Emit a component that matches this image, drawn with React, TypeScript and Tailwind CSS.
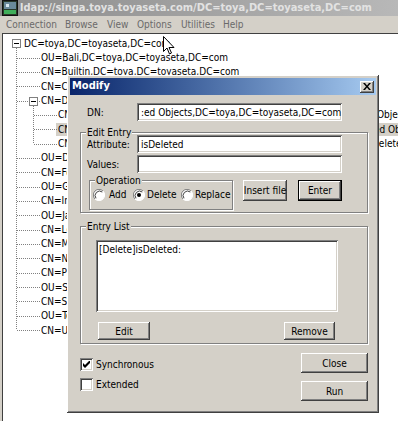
import React from 'react';

const raised =
  'bg-[#d4d0c8] shadow-[inset_-1px_-1px_#404040,inset_1px_1px_#ffffff,inset_-2px_-2px_#808080,inset_2px_2px_#d4d0c8]';
const sunken =
  'bg-white shadow-[inset_1px_1px_#808080,inset_-1px_-1px_#ffffff,inset_2px_2px_#404040,inset_-2px_-2px_#d4d0c8]';
const etched = 'border border-[#808080] shadow-[1px_1px_0_#ffffff,inset_1px_1px_0_#ffffff]';

type Row = { d: number; t: string; exp?: boolean; sel?: boolean };

const tail = ',DC=toya,DC=toyaseta,DC=com';
const rows: Row[] = [
  { d: 0, t: 'DC=toya,DC=toyaseta,DC=com', exp: true },
  { d: 1, t: 'OU=Bali' + tail },
  { d: 1, t: 'CN=Builtin' + tail },
  { d: 1, t: 'CN=Computers' + tail },
  { d: 1, t: 'CN=Deleted Objects' + tail, exp: true },
  { d: 2, t: 'CN=Lab-PC03 DEL:7c1e9a42-5b3d-4e1f-8a2c-9d0b6f31e,CN=Deleted Objects' + tail },
  { d: 2, t: 'CN=Kasir-02 DEL:3fa84d19-c6e2-4b7a-9e51-d2008c7ae3f1,CN=Deleted Objects' + tail, sel: true },
  { d: 2, t: 'CN=Guest Users DEL:9d02b7e5-1a4f-4d8e-b3d6-05a27e901408,CN=Deleted Objects' + tail },
  { d: 1, t: 'OU=Domain Controllers' + tail },
  { d: 1, t: 'CN=ForeignSecurityPrincipals' + tail },
  { d: 1, t: 'OU=Groups' + tail },
  { d: 1, t: 'CN=Infrastructure' + tail },
  { d: 1, t: 'OU=Jakarta' + tail },
  { d: 1, t: 'CN=LostAndFound' + tail },
  { d: 1, t: 'CN=Microsoft' + tail },
  { d: 1, t: 'CN=NTDS Quotas' + tail },
  { d: 1, t: 'CN=Program Data' + tail },
  { d: 1, t: 'OU=Surabaya' + tail },
  { d: 1, t: 'CN=System' + tail },
  { d: 1, t: 'OU=Toko' + tail },
  { d: 1, t: 'CN=Users' + tail },
];

const ROW = 14.35;
const cy = (i: number) => 2 + i * ROW + ROW / 2;

function TreeLines() {
  const last1 = rows.length - 1;
  return (
    <svg className="absolute inset-0 pointer-events-none" width="398" height="390">
      <g stroke="#808080" strokeDasharray="1 1" shapeRendering="crispEdges">
        <line x1="13.5" y1={cy(0) + 5} x2="13.5" y2={cy(last1)} />
        {rows.map((r, i) =>
          r.d === 1 ? <line key={i} x1="14" y1={Math.round(cy(i)) + 0.5} x2="37" y2={Math.round(cy(i)) + 0.5} /> : null
        )}
        <line x1="30.5" y1={cy(4) + 5} x2="30.5" y2={cy(7)} />
        {rows.map((r, i) =>
          r.d === 2 ? <line key={'g' + i} x1="31" y1={Math.round(cy(i)) + 0.5} x2="54" y2={Math.round(cy(i)) + 0.5} /> : null
        )}
      </g>
      {[{ x: 9, i: 0 }, { x: 26, i: 4 }].map((b) => {
        const y = Math.round(cy(b.i)) - 4;
        return (
          <g key={b.i} shapeRendering="crispEdges">
            <rect x={b.x + 0.5} y={y + 0.5} width="8" height="8" fill="#fff" stroke="#808080" />
            <line x1={b.x + 2} y1={y + 4.5} x2={b.x + 7} y2={y + 4.5} stroke="#000" />
          </g>
        );
      })}
    </svg>
  );
}

function Radio({ checked }: { checked?: boolean }) {
  return (
    <svg width="12" height="12" viewBox="0 0 12 12" className="shrink-0">
      <circle cx="6" cy="6" r="5.5" fill="#fff" />
      <path d="M10 2A5.5 5.5 0 0 0 2 10" fill="none" stroke="#808080" strokeWidth="1" />
      <path d="M9.3 3A4.5 4.5 0 0 0 3 9.3" fill="none" stroke="#404040" strokeWidth="1" />
      <path d="M2 10A5.5 5.5 0 0 0 10 2" fill="none" stroke="#ffffff" strokeWidth="1" />
      {checked && <circle cx="6" cy="6" r="2" fill="#000" />}
    </svg>
  );
}

function Check({ checked }: { checked?: boolean }) {
  return (
    <div className={`${sunken} w-[13px] h-[13px] shrink-0 flex items-center justify-center`}>
      {checked && (
        <svg width="7" height="7" viewBox="0 0 7 7">
          <path d="M0 2v3l2 2 5-5V-1L2 4z" fill="#000" />
        </svg>
      )}
    </div>
  );
}

function Btn({ children, className = '', def }: { children: React.ReactNode; className?: string; def?: boolean }) {
  return (
    <div
      className={`${def ? 'border border-black' : ''} ${raised} flex items-center justify-center shrink-0 whitespace-nowrap overflow-hidden ${className}`}
    >
      {children}
    </div>
  );
}

export default function App() {
  return (
    <div className="w-[398px] h-[421px] relative overflow-hidden bg-[#d4d0c8] text-[10px] text-black font-['DejaVu_Sans_Condensed','Liberation_Sans',sans-serif] [font-stretch:condensed] flex flex-col">
      {/* Main window title bar (inactive) */}
      <div className="h-[16px] bg-linear-to-r from-[#8c8c8c] to-[#b8b8b8] flex items-center">
        <svg width="16" height="16" viewBox="0 0 16 16" className="ml-[2px]">
          <rect x="0.5" y="0.5" width="15" height="15" fill="#2a3a2a" stroke="#111" />
          <rect x="2" y="2" width="12" height="7" fill="#6a8a9a" />
          <rect x="2" y="10" width="12" height="4" fill="#3fae5a" />
          <rect x="4" y="4" width="3" height="3" fill="#d8e8f0" />
        </svg>
        <span className="ml-[2px] text-[11px] font-bold text-[#e2e2e2] whitespace-nowrap">
          ldap://singa.toya.toyaseta.com/DC=toya,DC=toyaseta,DC=com
        </span>
      </div>

      {/* Menu bar */}
      <div className="h-[17px] flex items-center text-[#6a6a6a] whitespace-nowrap">
        <span className="ml-[6px] w-[59px]">Connection</span>
        <span className="w-[42px]">Browse</span>
        <span className="w-[30px]">View</span>
        <span className="w-[44px]">Options</span>
        <span className="w-[42px]">Utilities</span>
        <span>Help</span>
      </div>

      {/* Tree view */}
      <div className="flex-1 ml-[2px] border-l border-t border-[#404040] bg-white relative pt-[2px]">
        <TreeLines />
        {rows.map((r, i) => (
          <div key={i} className="h-[14.35px] flex items-center whitespace-nowrap" style={{ paddingLeft: 21 + 17 * r.d - 2 }}>
            <span className={`px-[2px] leading-[13px] ${r.sel ? 'bg-[#d4d0c8]' : ''}`}>{r.t}</span>
          </div>
        ))}
      </div>

      {/* Mouse pointer */}
      <svg className="absolute left-[163px] top-[36px]" width="12" height="20" viewBox="0 0 12 20">
        <path d="M0.5 0.5v15l3.5-3.5 2.5 6 2-1-2.5-5.5h5z" fill="#fff" stroke="#000" strokeWidth="1" />
      </svg>

      {/* Modify dialog */}
      <div className={`absolute left-[67px] top-[75px] w-[312px] h-[338px] p-[3px] ${raised}`}>
        <div className="h-[17px] bg-linear-to-r from-[#0a246a] to-[#a6caf0] flex items-center justify-between">
          <span className="ml-[2px] text-[11px] font-bold text-white">Modify</span>
          <div className={`${raised} w-[14px] h-[12px] mr-[2px] flex items-center justify-center`}>
            <svg width="8" height="7" viewBox="0 0 8 7">
              <path d="M0 0h2l2 2.5L6 0h2L5 3.5 8 7H6L4 4.5 2 7H0l3-3.5z" fill="#000" />
            </svg>
          </div>
        </div>

        {/* DN */}
        <div className="mt-[8px] h-[18px] flex items-center">
          <span className="ml-[17px] w-[50px]">DN:</span>
          <div className={`${sunken} w-[205px] h-[18px] flex items-center overflow-hidden pl-[4px] whitespace-nowrap`}>
            :ed Objects,DC=toya,DC=toyaseta,DC=com
          </div>
        </div>

        {/* Edit Entry */}
        <div className={`${etched} mt-[11px] ml-[10px] w-[288px] h-[81px]`}>
          <div className="-mt-[7px] ml-[5px] px-[1px] w-fit leading-[13px] bg-[#d4d0c8]">Edit Entry</div>
          <div className="-mt-[4px] h-[18px] flex items-center">
            <span className="ml-[6px] w-[50px]">Attribute:</span>
            <div className={`${sunken} w-[205px] h-[18px] flex items-center pl-[4px]`}>isDeleted</div>
          </div>
          <div className="mt-[2px] h-[18px] flex items-center">
            <span className="ml-[6px] w-[50px]">Values:</span>
            <div className={`${sunken} w-[205px] h-[18px]`} />
          </div>
          <div className="mt-[7px] flex items-start">
            <div className={`${etched} ml-[8px] w-[144px] h-[30px]`}>
              <div className="-mt-[7px] ml-[5px] px-[1px] w-fit leading-[13px] bg-[#d4d0c8]">Operation</div>
              <div className="mt-[1px] h-[13px] flex items-center whitespace-nowrap">
                <div className="ml-[3px] w-[40px] flex items-center gap-[4px]">
                  <Radio />
                  <span>Add</span>
                </div>
                <div className="w-[48px] flex items-center gap-[2px]">
                  <Radio checked />
                  <span>Delete</span>
                </div>
                <div className="flex items-center gap-[2px]">
                  <Radio />
                  <span>Replace</span>
                </div>
              </div>
            </div>
            <Btn className="ml-[10px] w-[44px] h-[21px]">Insert file</Btn>
            <Btn def className="ml-[11px] w-[44px] h-[21px]">Enter</Btn>
          </div>
        </div>

        {/* Entry List */}
        <div className={`${etched} mt-[13px] ml-[10px] w-[288px] h-[118px]`}>
          <div className="-mt-[7px] ml-[5px] px-[1px] w-fit leading-[13px] bg-[#d4d0c8]">Entry List</div>
          <div className={`${sunken} mt-[7px] ml-[15px] w-[242px] h-[72px] pt-[3px] pl-[3px] leading-[13px]`}>
            [Delete]isDeleted:
          </div>
          <div className="mt-[10px] flex">
            <Btn className="ml-[17px] w-[52px] h-[18px]">Edit</Btn>
            <Btn className="ml-[134px] w-[51px] h-[18px]">Remove</Btn>
          </div>
        </div>

        {/* Bottom */}
        <div className="mt-[9px] flex">
          <div className="ml-[10px] w-[221px] mt-[5px] flex flex-col gap-[7px]">
            <div className="h-[13px] flex items-center gap-[3px]">
              <Check checked />
              <span>Synchronous</span>
            </div>
            <div className="h-[13px] flex items-center gap-[3px]">
              <Check />
              <span>Extended</span>
            </div>
          </div>
          <div className="flex flex-col gap-[8px]">
            <Btn className="w-[67px] h-[20px]">Close</Btn>
            <Btn className="w-[67px] h-[20px]">Run</Btn>
          </div>
        </div>
      </div>
    </div>
  );
}
